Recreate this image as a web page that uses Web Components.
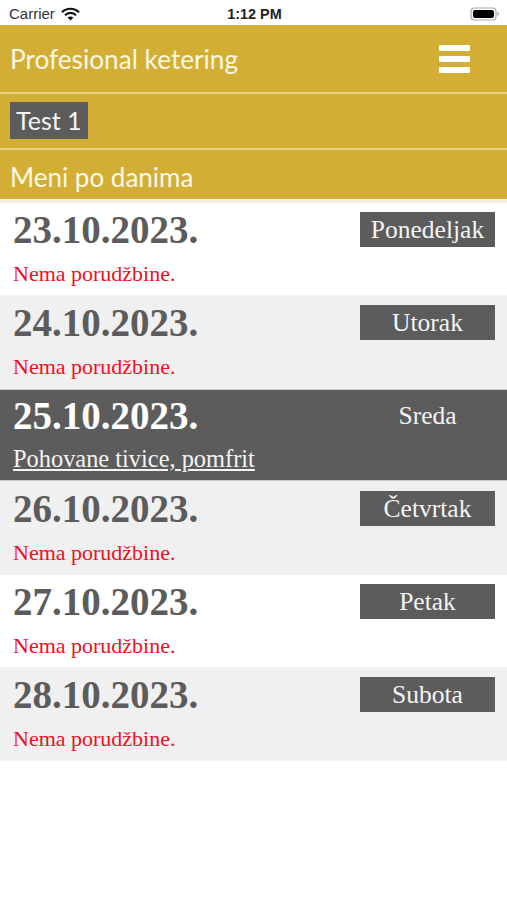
<!DOCTYPE html>
<html>
<head>
<meta charset="utf-8">
<style>
  html, body { margin: 0; padding: 0; background: #fff; }
  body { width: 507px; height: 900px; overflow: hidden; font-family: "Liberation Serif", serif; }
</style>
</head>
<body>
<status-bar></status-bar>
<app-header title="Profesional ketering" user="Test 1" section="Meni po danima"></app-header>
<day-list>
  <day-row date="23.10.2023." day="Ponedeljak" height="92">Nema porudžbine.</day-row>
  <day-row date="24.10.2023." day="Utorak" height="94" shade="grey">Nema porudžbine.</day-row>
  <day-row date="25.10.2023." day="Sreda" height="92" shade="active">Pohovane tivice, pomfrit</day-row>
  <day-row date="26.10.2023." day="Četvrtak" height="94" shade="grey">Nema porudžbine.</day-row>
  <day-row date="27.10.2023." day="Petak" height="92">Nema porudžbine.</day-row>
  <day-row date="28.10.2023." day="Subota" height="94" shade="grey">Nema porudžbine.</day-row>
</day-list>

<script>
class StatusBar extends HTMLElement {
  connectedCallback() {
    const shadow = this.attachShadow({ mode: 'open' });
    shadow.innerHTML = `
      <style>
        :host {
          display: grid;
          grid-template-columns: 1fr auto 1fr;
          align-items: center;
          height: 25px;
          padding: 2px 7px 0 9px;
          box-sizing: border-box;
          font: 14px "Liberation Sans", Arial, sans-serif;
          color: #222;
        }
        .left { display: flex; align-items: center; gap: 6px; font-size: 15px; color: #333; }
        .time { font-weight: bold; font-size: 14.4px; }
        .right { display: flex; justify-content: flex-end; }
        svg { display: block; }
      </style>
      <div class="left">
        <span>Carrier</span>
        <svg width="19" height="14" viewBox="0 0 19 14">
          <path d="M1 5.2C5.8.6 13.2.6 18 5.2" fill="none" stroke="#111" stroke-width="2.2"/>
          <path d="M4 8.2c3.2-3 7.8-3 11 0" fill="none" stroke="#111" stroke-width="2.2"/>
          <path d="M6.6 10.6c1.8-1.5 4-1.5 5.8 0L9.5 13.6z" fill="#111"/>
        </svg>
      </div>
      <div class="time">1:12 PM</div>
      <div class="right">
        <svg width="30" height="14" viewBox="0 0 30 14">
          <rect x="1" y="1" width="25" height="12" rx="3.5" fill="none" stroke="#aaa" stroke-width="1.2"/>
          <rect x="3" y="3" width="21" height="8" rx="2" fill="#000"/>
          <path d="M27.5 5v4c1-.3 1.5-1 1.5-2s-.5-1.7-1.5-2z" fill="#aaa"/>
        </svg>
      </div>`;
  }
}

class AppHeader extends HTMLElement {
  connectedCallback() {
    const shadow = this.attachShadow({ mode: 'open' });
    shadow.innerHTML = `
      <style>
        :host {
          display: block;
          background: #d3ae35;
          color: #fdf8e6;
          font-family: Lato, "Open Sans", sans-serif;
          border-bottom: 4px solid #f5f0e2;
        }
        .band { display: flex; align-items: center; box-sizing: border-box; padding: 0 10px; }
        .band + .band { border-top: 2px solid #e9d281; }
        .top { height: 67px; justify-content: space-between; font-size: 26.2px; }
        .user { height: 56px; }
        .section { height: 51px; font-size: 26px; padding-top: 4px; }
        .chip {
          background: #5c5c5c;
          color: #f4f4f4;
          font-size: 25px;
          line-height: 37px;
          padding: 0 6px;
          margin-top: -1px;
        }
        .burger { width: 31px; margin-right: 27px; display: flex; flex-direction: column; gap: 5px; }
        .burger i { display: block; height: 6px; border-radius: 1px; background: #fff; }
      </style>
      <div class="band top">
        <span>${this.getAttribute('title')}</span>
        <div class="burger"><i></i><i></i><i></i></div>
      </div>
      <div class="band user"><span class="chip">${this.getAttribute('user')}</span></div>
      <div class="band section">${this.getAttribute('section')}</div>`;
    this.removeAttribute('title');
  }
}

class DayList extends HTMLElement {
  connectedCallback() {
    const shadow = this.attachShadow({ mode: 'open' });
    shadow.innerHTML = `
      <style>:host { display: flex; flex-direction: column; }</style>
      <slot></slot>`;
  }
}

class DayRow extends HTMLElement {
  connectedCallback() {
    const shadow = this.attachShadow({ mode: 'open' });
    const active = this.getAttribute('shade') === 'active';
    shadow.innerHTML = `
      <style>
        :host {
          display: block;
          box-sizing: border-box;
          padding: 5px 12px 0 13px;
          font-family: "Liberation Serif", serif;
          color: #5c5c5c;
          background: #fff;
        }
        :host([shade="grey"]) { background: #f0f0f0; padding-top: 6px; }
        :host([shade="active"]) {
          background: #5c5c5c;
          color: #fff;
          box-shadow: inset 0 1px 0 #c9c9c9, inset 0 -1px 0 #c9c9c9;
        }
        .head { display: flex; justify-content: space-between; align-items: flex-start; }
        .date { font-weight: bold; font-size: 39px; line-height: 44px; }
        .day {
          width: 135px;
          height: 35px;
          margin-top: 4px;
          background: #5c5c5c;
          color: #f4f4f4;
          font-size: 25.5px;
          line-height: 35px;
          text-align: center;
        }
        .note { margin-top: 8px; font-size: 22px; line-height: 28px; color: #f00f1e; }
        .note.dish { margin-top: 7px; color: #f4f4f4; text-decoration: underline; font-size: 24.4px; }
      </style>
      <div class="head">
        <div class="date">${this.getAttribute('date')}</div>
        <div class="day">${this.getAttribute('day')}</div>
      </div>
      <div class="note ${active ? 'dish' : ''}"><slot></slot></div>`;
    this.style.height = this.getAttribute('height') + 'px';
  }
}

customElements.define('status-bar', StatusBar);
customElements.define('app-header', AppHeader);
customElements.define('day-list', DayList);
customElements.define('day-row', DayRow);
</script>
</body>
</html>
